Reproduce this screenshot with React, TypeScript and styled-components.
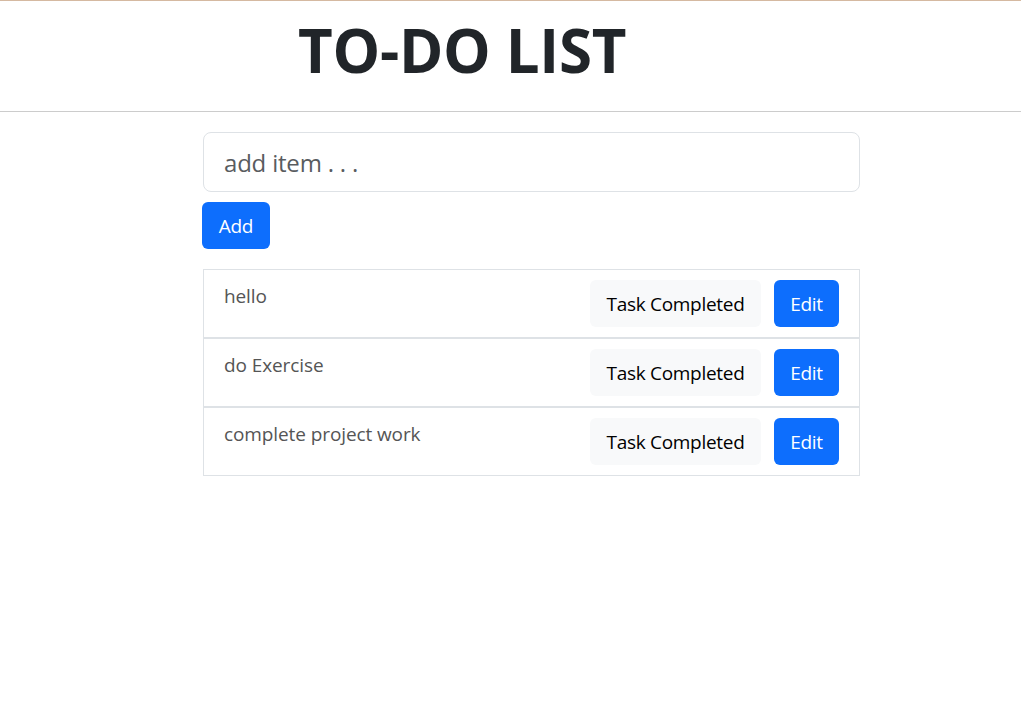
import React from "react";
import styled, { createGlobalStyle } from "styled-components";

const GlobalStyle = createGlobalStyle`
  * { box-sizing: border-box; }
  html, body { margin: 0; padding: 0; background: #fff; }
  body {
    font-family: "Open Sans", "Noto Sans", "Liberation Sans", sans-serif;
    color: #212529;
  }
`;

const Page = styled.div`
  min-height: 726px;
  border-top: 1px solid #d5b9a1;
`;

const Header = styled.header`
  height: 111px;
  border-bottom: 1px solid #cccccc;
  display: flex;
  align-items: center;
  padding-left: 298px;
`;

const Title = styled.h1`
  margin: 0;
  font-family: "Open Sans", "Noto Sans", sans-serif;
  font-weight: 700;
  font-size: 60px;
  line-height: 1;
  color: #212529;
  letter-spacing: -0.3px;
  transform: translateY(-6px);
`;

const Main = styled.main`
  width: 657px;
  margin-left: 203px;
  padding-top: 20px;
  display: flex;
  flex-direction: column;
`;

const Input = styled.input`
  width: 100%;
  height: 60px;
  border: 1px solid #dee2e6;
  border-radius: 8px;
  padding: 0 20px;
  font-family: inherit;
  font-size: 24px;
  color: #212529;
  outline: none;
  letter-spacing: -0.2px;
  &::placeholder { color: #595c5f; }
`;

const Button = styled.button<{ $variant?: "primary" | "light"; $width: number }>`
  height: 47px;
  width: ${(p) => p.$width}px;
  padding: 0;
  border: none;
  border-radius: 6px;
  font-family: inherit;
  font-size: 19px;
  letter-spacing: -0.3px;
  cursor: pointer;
  background: ${(p) => (p.$variant === "light" ? "#f8f9fa" : "#0d6efd")};
  color: ${(p) => (p.$variant === "light" ? "#000" : "#fff")};
`;

const AddButton = styled(Button)`
  align-self: flex-start;
  margin-top: 10px;
  margin-left: -1px;
`;

const List = styled.ul`
  list-style: none;
  margin: 20px 0 0;
  padding: 0;
`;

const Item = styled.li`
  display: flex;
  justify-content: space-between;
  align-items: flex-start;
  border: 1px solid #dee2e6;
  padding: 10px 20px;
  height: 69px;
`;

const ItemText = styled.span`
  font-size: 19px;
  color: #555;
  margin-top: 3px;
  letter-spacing: -0.1px;
`;

const Actions = styled.div`
  display: flex;
  gap: 13px;
`;

const items = ["hello", "do Exercise", "complete project work"];

export default function App() {
  return (
    <>
      <GlobalStyle />
      <Page>
        <Header>
          <Title>TO-DO LIST</Title>
        </Header>
        <Main>
          <Input placeholder="add item . . ." />
          <AddButton $width={68}>Add</AddButton>
          <List>
            {items.map((t) => (
              <Item key={t}>
                <ItemText>{t}</ItemText>
                <Actions>
                  <Button $variant="light" $width={171}>Task Completed</Button>
                  <Button $width={65}>Edit</Button>
                </Actions>
              </Item>
            ))}
          </List>
        </Main>
      </Page>
    </>
  );
}
